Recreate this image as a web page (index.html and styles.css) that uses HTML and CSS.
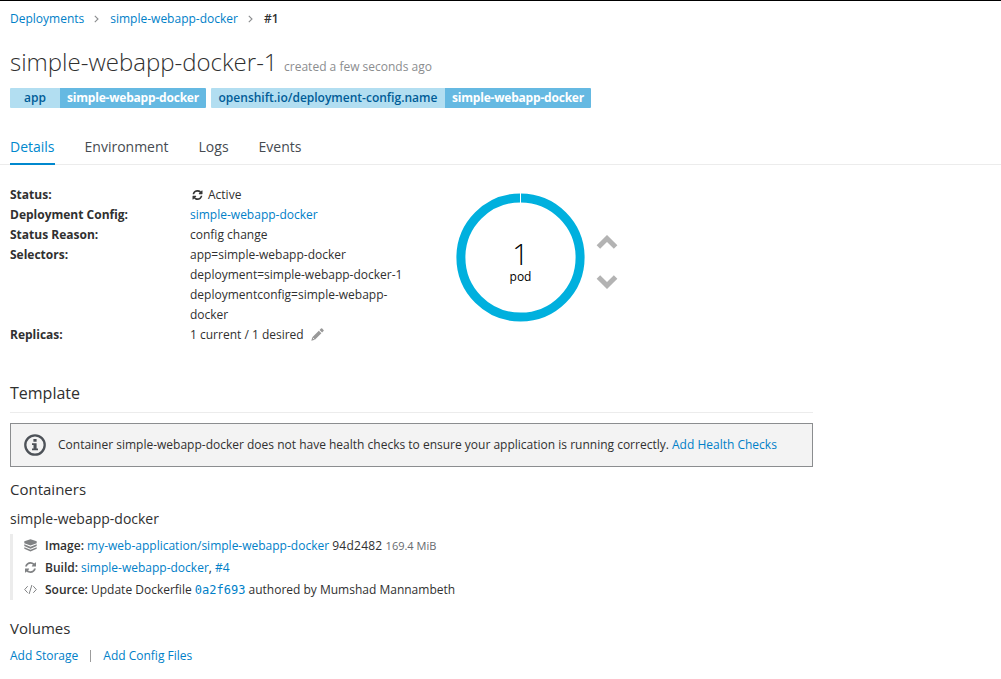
FILE: index.html
```html
<!DOCTYPE html>
<html lang="en">
<head>
<meta charset="utf-8">
<title>simple-webapp-docker-1</title>
<link rel="stylesheet" href="styles.css">
</head>
<body>
<svg class="defs" width="0" height="0">
  <symbol id="refresh" viewBox="128 128 1536 1536"><path d="M1639 1056q0 5-1 7-64 268-268 434.5t-478 166.5q-146 0-282.5-55t-243.5-157l-129 129q-19 19-45 19t-45-19-19-45v-448q0-26 19-45t45-19h448q26 0 45 19t19 45-19 45l-137 137q71 66 161 102t187 36q134 0 250-65t186-179q11-17 53-117 8-23 30-23h192q13 0 22.5 9.5t9.5 22.5zm25-800v448q0 26-19 45t-45 19h-448q-26 0-45-19t-19-45 19-45l138-138q-148-137-349-137-134 0-250 65t-186 179q-11 17-53 117-8 23-30 23h-199q-13 0-22.5-9.5t-9.5-22.5v-7q65-268 270-434.5t480-166.5q146 0 284 55.5t245 156.5l130-129q19-19 45-19t45 19 19 45z"/></symbol>
</svg>
<nav class="breadcrumb">
  <a>Deployments</a><svg class="sep" viewBox="0 0 5 8"><path d="M.8.8 4 4 .8 7.2"/></svg><a>simple-webapp-docker</a><svg class="sep" viewBox="0 0 5 8"><path d="M.8.8 4 4 .8 7.2"/></svg><strong>#1</strong>
</nav>
<header class="title">
  <h1>simple-webapp-docker-1</h1><small>created a few seconds ago</small>
</header>
<div class="labels">
  <div class="label"><span class="key key-app">app</span><span class="value">simple-webapp-docker</span></div>
  <div class="label"><span class="key key-config">openshift.io/deployment-config.name</span><span class="value">simple-webapp-docker</span></div>
</div>
<nav class="tabs">
  <a class="active">Details</a><a>Environment</a><a>Logs</a><a>Events</a>
</nav>
<main>
  <section class="overview">
    <dl>
      <dt>Status:</dt><dd><svg class="status-icon"><use href="#refresh"/></svg>Active</dd>
      <dt>Deployment Config:</dt><dd><a>simple-webapp-docker</a></dd>
      <dt>Status Reason:</dt><dd>config change</dd>
      <dt>Selectors:</dt><dd>app=simple-webapp-docker<br>deployment=simple-webapp-docker-1<br>deploymentconfig=simple-webapp-<br>docker</dd>
      <dt>Replicas:</dt><dd>1 current / 1 desired<svg class="pencil" viewBox="0 0 13 13"><path d="M.3 12.7 1.3 9.2 7.8 2.7l2.6 2.6-6.5 6.5zM8.5 2 10 .6q.6-.6 1.2 0l1.3 1.3q.6.6 0 1.2l-1.4 1.5z"/><path class="pencil-tip" d="M1.8 9.8 3.4 11.4"/></svg></dd>
    </dl>
    <div class="donut">
      <svg class="ring" viewBox="0 0 130 130"><circle cx="65.5" cy="65.5" r="59.6"/><path d="M65.5 0V11"/></svg>
      <div class="count"><span class="number">1</span><span class="unit">pod</span></div>
    </div>
    <div class="scaling">
      <svg viewBox="0 0 22 14"><path d="M2.4 12 11 3.5l8.6 8.5"/></svg>
      <svg viewBox="0 0 22 14"><path d="M2.4 2 11 10.5 19.6 2"/></svg>
    </div>
  </section>
  <h2>Template</h2>
  <div class="alert">
    <svg class="info" viewBox="0 0 22 22"><circle cx="11" cy="11" r="9.7"/><path d="M9.4 5h3.2v2.8H9.4zM8 9.2h4.6v5.3H14v1.8H8v-1.8h1.5V11H8z"/></svg>
    <span class="message">Container simple-webapp-docker does not have health checks to ensure your application is running correctly. <a>Add Health Checks</a></span>
  </div>
  <h3 class="containers">Containers</h3>
  <h4>simple-webapp-docker</h4>
  <div class="container-info">
    <div class="row"><svg class="icon" viewBox="0 0 13 13"><path d="M6.5.2 12.7 2.2v2L6.5 6.6.3 4.2v-2zM.3 5.2l6.2 2.5 6.2-2.5v1.9L6.5 9.7.3 7.1zM.3 8.2l6.2 2.5 6.2-2.5v1.6l-6.2 2.7-6.2-2.7z"/></svg><p><b>Image:</b> <a class="image-link">my-web-application/simple-webapp-docker</a> <code class="image-id">94d2482</code> <small>169.4 MiB</small></p></div>
    <div class="row"><svg class="icon build" viewBox="0 0 13 13"><use href="#refresh" x="1" y="1" width="11" height="11"/></svg><p><b>Build:</b> <a>simple-webapp-docker</a>, <a>#4</a></p></div>
    <div class="row"><svg class="icon code" viewBox="0 0 13 13"><path d="M3.7 3.2.7 6.5l3 3.3M9.3 3.2l3 3.3-3 3.3M7.9 2 5.1 11"/></svg><p><b>Source:</b> Update Dockerfile <a><code class="commit">0a2f693</code></a> authored by Mumshad Mannambeth</p></div>
  </div>
  <h3 class="volumes">Volumes</h3>
  <div class="actions"><a>Add Storage</a><span class="divider"></span><a>Add Config Files</a></div>
</main>
</body>
</html>
```
FILE: styles.css
```css
* { box-sizing: border-box; }
body { margin: 0; height: 679px; overflow: hidden; border-top: 1px solid #000; background: #fff; color: #303030; font: 12px/20px "Open Sans", sans-serif; }
a { color: #0080c8; text-decoration: none; }
.defs { position: absolute; }
h1, h2, h3, h4, p, dl, dd { margin: 0; font-weight: 400; }
.breadcrumb { display: flex; align-items: center; height: 20px; margin: 8px 0 0 10px; }
.sep { width: 5px; height: 8px; margin: 0 11px 0 10px; fill: none; stroke: #8b8d8f; stroke-width: 1.1; }
.breadcrumb strong { font-weight: 600; }
.title { display: flex; align-items: baseline; height: 38px; margin: 14px 0 0 10px; }
.title h1 { font-size: 24px; font-weight: 300; line-height: 38px; }
.title small { margin-left: 6.5px; color: #8b8d8f; font-size: 12px; }
.labels { display: flex; gap: 5px; margin: 7px 0 0 10px; }
.label { display: flex; height: 20px; border-radius: 1px; overflow: hidden; font-weight: 600; line-height: 19px; text-align: center; white-space: nowrap; }
.key { background: #b2def1; color: #005c97; }
.key-app { width: 50px; }
.key-config { width: 234px; }
.value { width: 146px; background: #65b9e2; color: #fff; font-weight: 700; letter-spacing: -.2px; }
.tabs { display: flex; gap: 30px; height: 36px; margin-top: 21px; padding-left: 10px; border-bottom: 1px solid #ececec; font-size: 14px; line-height: 36px; }
.tabs a { height: 36px; color: #464b51; }
.tabs .active { border-bottom: 2px solid #0088ce; color: #0088ce; }
main { width: 803px; margin: 20px 0 0 10px; }
.overview { display: flex; height: 160px; }
dl { display: grid; grid-template-columns: 180px 220px; grid-auto-rows: max-content; width: 445px; flex: none; }
dt { font-weight: 700; }
.status-icon { width: 11px; height: 10px; margin: 0 5px 0 2px; vertical-align: -1px; fill: #363636; }
.pencil { width: 13px; height: 13px; margin-left: 7px; vertical-align: -2px; fill: #999; }
.pencil-tip { stroke: #fff; stroke-width: .8; }
.donut { display: grid; width: 130px; height: 130px; margin-top: 7px; }
.ring, .count { grid-area: 1 / 1; }
.ring { width: 130px; height: 130px; }
.ring circle { fill: none; stroke: #00b0de; stroke-width: 9; }
.ring path { stroke: #fff; stroke-width: 1; }
.count { display: flex; flex-direction: column; align-items: center; padding: 47px 0 0 1px; color: #000; }
.number { font-size: 29px; font-weight: 300; line-height: 30px; }
.unit { line-height: 16px; }
.scaling { display: flex; flex-direction: column; gap: 26px; width: 22px; margin: 50px 0 0 11px; }
.scaling svg { width: 22px; height: 14px; fill: none; stroke: #b3b3b3; stroke-width: 5; }
h2 { height: 30px; margin-top: 38px; border-bottom: 1px solid #ececec; font-size: 16px; line-height: 20px; }
.alert { display: flex; align-items: center; height: 44px; margin-top: 10px; padding-left: 13px; border: 1px solid #8b8d8f; background: #f3f3f3; }
.info { width: 22px; height: 22px; flex: none; margin-right: 12px; fill: #4d5258; }
.info circle { fill: none; stroke: #4d5258; stroke-width: 2.3; }
.message { white-space: nowrap; }
h3, h4 { font-size: 14px; line-height: 20px; }
h3 { font-size: 15px; }
.containers { margin-top: 12px; }
h4 { margin-top: 10px; }
.container-info { margin-top: 5px; padding-left: 10.5px; border-left: 3px solid #ececec; }
.row { display: flex; align-items: center; height: 22px; white-space: nowrap; }
.row p { padding-top: 2px; }
.icon { width: 13px; height: 13px; margin-right: 8.5px; fill: #808284; }
.icon.code { fill: none; stroke: #808284; stroke-width: 1; }
.row b { font-weight: 600; }
.row small { font-size: 11px; color: #666a6f; }
code { font-family: "DejaVu Sans Mono", monospace; font-size: 12px; }
.image-id { font-family: "Open Sans", sans-serif; letter-spacing: .25px; }
.volumes { margin-top: 18px; }
.actions { display: flex; align-items: center; margin-top: 8px; }
.divider { width: 1px; height: 12px; margin: 0 12px; background: #9c9c9c; }
```
